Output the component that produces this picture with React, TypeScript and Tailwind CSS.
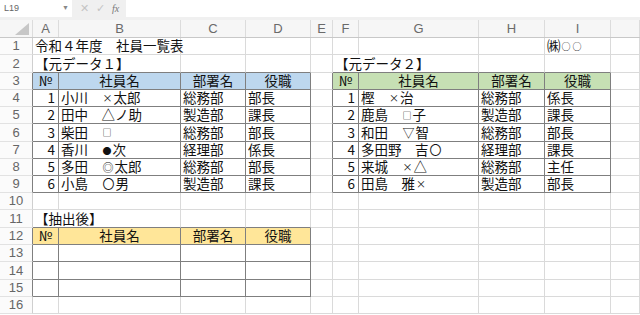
import React from "react";

type Cell = {
  text?: string;
  span?: number;
  align?: "left" | "center" | "right";
};

type Row = Record<number, Cell>;

const colWidths = [33, 26, 122, 65, 65, 22, 26, 120, 66, 66, 29];
const colLetters = ["", "A", "B", "C", "D", "E", "F", "G", "H", "I", ""];
const rowHeights = [17, 18, 17, 17, 17, 18, 17, 17, 17, 17, 18, 17, 17, 18, 17, 17];

const jp = "font-['Noto_Sans_CJK_JP','Noto_Sans_CJK_SC',sans-serif]";

// symbols in the proportional font come out smaller than kanji
const symbolSize: Record<string, string> = {
  "×": "text-[10px]",
  "□": "text-[9px]",
  "●": "text-[9px]",
  "◎": "text-[11px]",
  "〇": "text-[12px]",
  "○": "text-[9px]",
  "▽": "text-[12px]",
};

// table ranges: [rowFrom, rowTo, colFrom, colTo, header fill]
const tables: [number, number, number, number, string][] = [
  [3, 9, 1, 4, "bg-[#bdd7ee]"],
  [3, 9, 6, 9, "bg-[#c6e0b4]"],
  [12, 15, 1, 4, "bg-[#ffe699]"],
];

function tableAt(r: number, c: number) {
  return tables.find(([r0, r1, c0, c1]) => r >= r0 && r <= r1 && c >= c0 && c <= c1);
}

const table1 = [
  ["1", "小川　×太郎", "総務部", "部長"],
  ["2", "田中　△ノ助", "製造部", "課長"],
  ["3", "柴田　□", "総務部", "部長"],
  ["4", "香川　●次", "経理部", "係長"],
  ["5", "多田　◎太郎", "総務部", "部長"],
  ["6", "小島　〇男", "製造部", "課長"],
];

const table2 = [
  ["1", "樫　×治", "総務部", "係長"],
  ["2", "鹿島　□子", "製造部", "課長"],
  ["3", "和田　▽智", "総務部", "部長"],
  ["4", "多田野　吉〇", "経理部", "課長"],
  ["5", "来城　×△", "総務部", "主任"],
  ["6", "田島　雅×", "製造部", "部長"],
];

const headers = ["№", "社員名", "部署名", "役職"];

function buildRows(): Row[] {
  const rows: Row[] = [];
  for (let i = 1; i <= 16; i++) rows[i] = {};
  rows[1][1] = { text: "令和４年度　社員一覧表", span: 2 };
  rows[1][9] = { text: "㈱○○" };
  rows[2][1] = { text: "【元データ１】", span: 2 };
  rows[2][6] = { text: "【元データ２】", span: 2 };
  rows[11][1] = { text: "【抽出後】", span: 2 };
  headers.forEach((h, i) => {
    rows[3][1 + i] = { text: h, align: "center" };
    rows[3][6 + i] = { text: h, align: "center" };
    rows[12][1 + i] = { text: h, align: "center" };
  });
  table1.forEach((d, k) => {
    d.forEach((t, i) => (rows[4 + k][1 + i] = { text: t, align: i === 0 ? "right" : "left" }));
  });
  table2.forEach((d, k) => {
    d.forEach((t, i) => (rows[4 + k][6 + i] = { text: t, align: i === 0 ? "right" : "left" }));
  });
  return rows;
}

// split into runs so only the symbols get their own smaller span
function CellText({ text }: { text: string }) {
  const parts: { s: string; sym: boolean }[] = [];
  for (const ch of Array.from(text)) {
    const sym = !!symbolSize[ch];
    const prev = parts[parts.length - 1];
    if (prev && !prev.sym && !sym) prev.s += ch;
    else parts.push({ s: ch, sym });
  }
  return (
    <>
      {parts.map((p, i) =>
        p.sym ? (
          <span key={i} className={`${symbolSize[p.s]} px-[1px]`}>
            {p.s}
          </span>
        ) : (
          <React.Fragment key={i}>{p.s}</React.Fragment>
        )
      )}
    </>
  );
}

function FormulaBar() {
  return (
    <div className="flex h-[20px] bg-[#f0f0f0] pb-[3px]">
      <div className="flex w-[72px] items-center justify-between bg-white pl-[4px] pr-[3px] text-[9px] text-[#666] font-['Liberation_Sans',sans-serif]">
        <span>L19</span>
        <span className="text-[7px] text-[#888]">▼</span>
      </div>
      <div className="flex w-[52px] items-center gap-[7px] pl-[8px] text-[11px] text-[#c4c4c4] font-['Liberation_Sans',sans-serif]">
        <span>✕</span>
        <span>✓</span>
        <span className="italic text-[10px] text-[#777] font-['Liberation_Serif',serif]">fx</span>
      </div>
      <div className="ml-[2px] flex-1 bg-white" />
    </div>
  );
}

function ColumnHeader() {
  return (
    <div className="flex h-[18px] bg-[#f6f6f6] border-b border-[#c8c8c8]">
      {colWidths.map((w, c) => (
        <div
          key={c}
          style={{ width: w }}
          className="relative flex items-center justify-center border-r border-[#dcdcdc] text-[13px] text-[#6a6a6a] font-['Liberation_Sans',sans-serif]"
        >
          {c === 0 ? (
            <svg width="14" height="12" viewBox="0 0 14 12" className="absolute bottom-[2px] right-[3px]">
              <polygon points="14,0 14,12 0,12" fill="#c7c7c7" />
            </svg>
          ) : (
            colLetters[c]
          )}
        </div>
      ))}
    </div>
  );
}

export default function App() {
  const rows = buildRows();
  const dark = "#7f7f7f";
  const light = "#dadada";

  return (
    <div className="h-[315px] w-[640px] overflow-hidden bg-white">
      <FormulaBar />
      <ColumnHeader />
      {rowHeights.map((h, idx) => {
        const r = idx + 1;
        const row = rows[r];
        const cells: React.ReactNode[] = [];
        cells.push(
          <div
            key="rh"
            style={{ width: colWidths[0], borderRightColor: tableAt(r, 1) ? dark : "#cfcfcf" }}
            className="flex items-center justify-center border-r border-b border-b-[#e2e2e2] bg-[#fbfbfb] text-[13px] text-[#666] font-['Liberation_Sans',sans-serif]"
          >
            {r}
          </div>
        );
        let c = 1;
        while (c < colWidths.length) {
          const cell = row[c] ?? {};
          const span = cell.span ?? 1;
          const last = c + span - 1;
          let w = 0;
          let bottomDark = false;
          for (let k = c; k <= last; k++) {
            w += colWidths[k];
            if (tableAt(r, k) || tableAt(r + 1, k)) bottomDark = true;
          }
          const rightDark = !!(tableAt(r, last) || tableAt(r, last + 1));
          const t = tableAt(r, c);
          const isHead = t && t[0] === r;
          const align =
            cell.align === "center" ? "justify-center" : cell.align === "right" ? "justify-end pr-[3px]" : "justify-start pl-[2px]";
          cells.push(
            <div
              key={c}
              style={{
                width: w,
                borderRightColor: rightDark ? dark : light,
                borderBottomColor: bottomDark ? dark : light,
              }}
              className={`flex items-center overflow-visible whitespace-nowrap border-r border-b text-[13.5px] leading-none text-[#111] ${jp} ${align} ${
                isHead ? t![4] : ""
              }`}
            >
              {cell.text && (
                <span className="flex items-center">
                  <CellText text={cell.text} />
                </span>
              )}
            </div>
          );
          c = last + 1;
        }
        return (
          <div key={r} style={{ height: h }} className="flex">
            {cells}
          </div>
        );
      })}
    </div>
  );
}
